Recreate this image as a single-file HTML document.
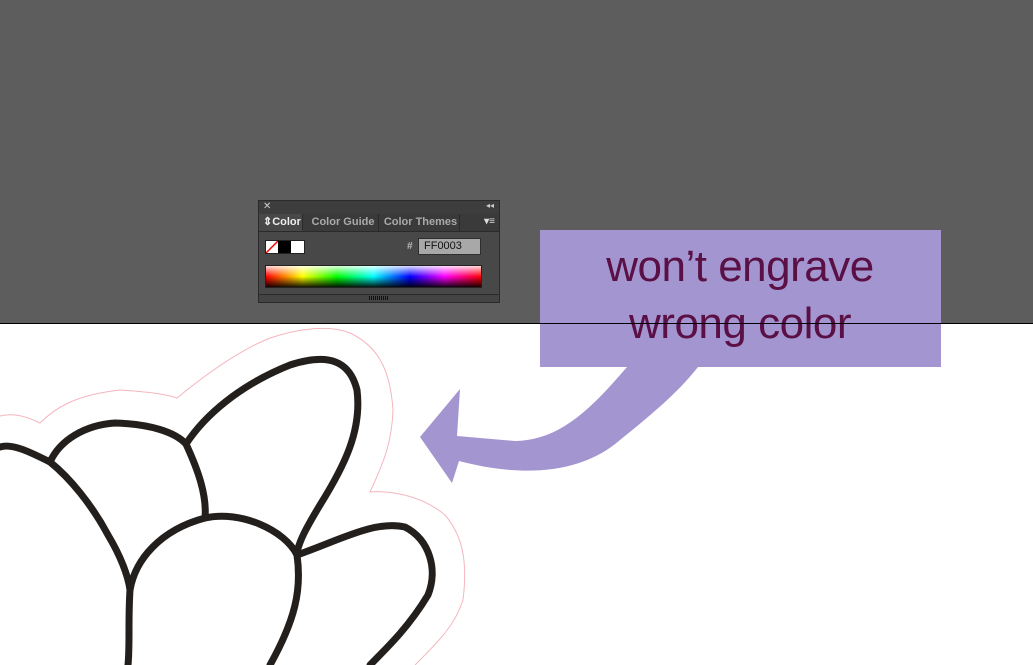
<!DOCTYPE html>
<html><head><style>
html,body{margin:0;padding:0}
body{width:1033px;height:665px;position:relative;overflow:hidden;background:#fff;font-family:"Liberation Sans",sans-serif}
.top{position:absolute;left:0;top:0;width:1033px;height:323px;background:#5d5d5d}
.line{position:absolute;left:0;top:323px;width:1033px;height:1px;background:#000;z-index:5}
.panel{position:absolute;left:258px;top:200px;width:242px;height:103px;background:#484848;border:1px solid #2a2a2a;box-sizing:border-box}
.tbar{height:13px;background:#3d3d3d;color:#ccc;font-size:10px;position:relative}
.tabs{height:17px;background:#3a3a3a;position:relative;font-size:11px;font-weight:bold;color:#aaa;border-bottom:1px solid #2a2a2a}
.tab{position:absolute;top:0;height:17px;line-height:17px;border-right:1px solid #2a2a2a}
.body{position:absolute;left:0;top:31px;width:240px}
</style></head><body>
<div class="top"></div>
<div class="panel">
 <div class="tbar"><span style="position:absolute;left:4px;top:0px;font-size:10px">✕</span><span style="position:absolute;right:5px;top:0;font-size:8px">◂◂</span></div>
 <div class="tabs">
  <div class="tab" style="left:0;width:44px;background:#484848;color:#eee;padding-left:4px;box-sizing:border-box;border-bottom:1px solid #484848">⇕Color</div>
  <div class="tab" style="left:49px;width:70px;text-align:center">Color Guide</div>
  <div class="tab" style="left:123px;width:77px;text-align:center">Color Themes</div>
  <div style="position:absolute;right:4px;top:2px;color:#ddd;font-size:10px">▾≡</div>
 </div>
 <div class="body">
  <div style="position:absolute;left:6px;top:8px;width:38px;height:12px;border:1px solid #222;background:linear-gradient(to right,#fff 0,#fff 12px,#000 12px,#000 25px,#fff 25px)"><svg width="12" height="12" style="position:absolute;left:0;top:0"><line x1="0" y1="12" x2="12" y2="0" stroke="red" stroke-width="1.5"/></svg></div>
  <div style="position:absolute;left:148px;top:9px;font-size:10px;color:#bbb;font-weight:bold">#</div>
  <div style="position:absolute;left:159px;top:6px;width:63px;height:17px;background:#a8a8a8;border:1px solid #2e2e2e;box-sizing:border-box;font-size:11px;line-height:15px;padding-left:5px;color:#111">FF0003</div>
  <div style="position:absolute;left:6px;top:33px;width:217px;height:23px;border:1px solid #222;box-sizing:border-box;background:linear-gradient(to bottom,rgba(255,255,255,.85),rgba(255,255,255,0) 50%,rgba(0,0,0,0) 50%,rgba(0,0,0,.9)),linear-gradient(to right,#f00,#ff0 17%,#0f0 33%,#0ff 50%,#00f 67%,#f0f 83%,#f00)"></div>
 </div>
 <div style="position:absolute;left:0;bottom:0;width:240px;height:7px;border-top:1px solid #2a2a2a;background:#444"><div style="position:absolute;left:110px;top:1px;width:20px;height:4px;background:repeating-linear-gradient(to right,#111 0 1px,transparent 1px 2px)"></div></div>
</div>
<div class="line"></div>
<svg width="1033" height="665" style="position:absolute;left:0;top:0">
 <path d="M0,416 C15,412 30,418 40,423 C55,408 75,395 120,390 C150,392 165,394 177,398 C205,375 240,350 270,338 C300,328 330,325 350,333 C375,345 390,365 393,410 C392,440 385,460 370,492 C395,490 425,498 445,515 C462,535 468,560 463,600 C455,625 440,640 415,665" fill="none" stroke="#f4b6be" stroke-width="1"/>
 <g fill="none" stroke="#231f1c" stroke-width="7" stroke-linejoin="round" stroke-linecap="round">
  <path d="M0,447 C12,443 30,452 50,462 C70,478 92,505 108,535 C120,555 128,575 130,590 C128,620 130,645 128,665"/>
  <path d="M50,462 C60,440 85,425 115,423 C150,424 175,432 186,444 C198,470 207,495 205,518"/>
  <path d="M186,444 C205,415 240,385 290,365 C330,352 350,362 357,390 C362,430 345,465 320,505 C305,530 300,540 297,552"/>
  <path d="M130,590 C135,560 160,530 205,518 C240,510 285,530 297,555 C302,590 295,620 270,665"/>
  <path d="M297,555 C340,540 375,520 405,527 C430,540 438,570 428,595 C410,625 390,645 370,665"/>
 </g>
 <rect x="540" y="230" width="401" height="137" fill="#a395d0"/>
 <path d="M627,367 C590,410 560,440 515,441 L457,436 L460,389 L420,437 L452,483 L459,461 C520,477 580,475 620,440 C655,412 680,390 698,367 Z" fill="#a395d0"/>
 <text x="740" y="281" text-anchor="middle" font-family="Liberation Sans, sans-serif" font-size="44" fill="#5a0f45" letter-spacing="-0.5">won’t engrave</text>
 <text x="740" y="338" text-anchor="middle" font-family="Liberation Sans, sans-serif" font-size="44" fill="#5a0f45" letter-spacing="-0.5">wrong color</text>
 <line x1="0" y1="323.5" x2="1033" y2="323.5" stroke="#000" stroke-width="1"/>
</svg>
</body></html>
